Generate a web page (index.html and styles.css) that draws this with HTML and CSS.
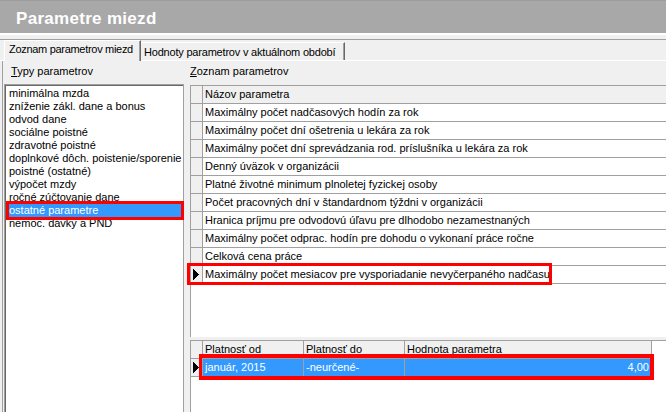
FILE: index.html
```html
<!DOCTYPE html>
<html lang="sk">
<head>
<meta charset="utf-8">
<title>Parametre miezd</title>
<link rel="stylesheet" href="styles.css">
</head>
<body>
<div class="titlebar"><span class="title">Parametre miezd</span></div>
<div class="hl"></div>
<div class="tabstrip">
  <div class="tabrow">
    <div class="tab active">Zoznam parametrov miezd</div>
    <div class="tab">Hodnoty parametrov v aktuálnom období</div>
  </div>
</div>
<div class="sheet">
  <div class="frame">
    <div class="col-left">
      <div class="label lbl-left"><u>T</u>ypy parametrov</div>
      <div class="listbox">
        <div class="item">minimálna mzda</div>
        <div class="item">zníženie zákl. dane a bonus</div>
        <div class="item">odvod dane</div>
        <div class="item">sociálne poistné</div>
        <div class="item">zdravotné poistné</div>
        <div class="item">doplnkové dôch. poistenie/sporenie</div>
        <div class="item">poistné (ostatné)</div>
        <div class="item">výpočet mzdy</div>
        <div class="item">ročné zúčtovanie dane</div>
        <div class="item sel">ostatné parametre</div>
        <div class="item">nemoc. dávky a PND</div>
      </div>
    </div>
    <div class="col-right">
      <div class="label"><u>Z</u>oznam parametrov</div>
      <div class="grid upper">
        <div class="row head"><div class="ind"></div><div class="cell wide">Názov parametra</div></div>
        <div class="row"><div class="ind"></div><div class="cell wide">Maximálny počet nadčasových hodín za rok</div></div>
        <div class="row"><div class="ind"></div><div class="cell wide">Maximálny počet dní ošetrenia u lekára za rok</div></div>
        <div class="row"><div class="ind"></div><div class="cell wide">Maximálny počet dní sprevádzania rod. príslušníka u lekára za rok</div></div>
        <div class="row"><div class="ind"></div><div class="cell wide">Denný úväzok v organizácii</div></div>
        <div class="row"><div class="ind"></div><div class="cell wide">Platné životné minimum plnoletej fyzickej osoby</div></div>
        <div class="row"><div class="ind"></div><div class="cell wide">Počet pracovných dní v štandardnom týždni v organizácii</div></div>
        <div class="row"><div class="ind"></div><div class="cell wide">Hranica príjmu pre odvodovú úľavu pre dlhodobo nezamestnaných</div></div>
        <div class="row"><div class="ind"></div><div class="cell wide">Maximálny počet odprac. hodín pre dohodu o vykonaní práce ročne</div></div>
        <div class="row"><div class="ind"></div><div class="cell wide">Celková cena práce</div></div>
        <div class="row"><div class="ind"><svg class="arrow" width="6" height="11" viewBox="0 0 6 11"><rect x="0" y="0" width="1" height="11"/><rect x="1" y="1" width="1" height="9"/><rect x="2" y="2" width="1" height="7"/><rect x="3" y="3" width="1" height="5"/><rect x="4" y="4" width="1" height="3"/><rect x="5" y="5" width="1" height="1"/></svg></div><div class="cell wide">Maximálny počet mesiacov pre vysporiadanie nevyčerpaného nadčasu</div></div>
      </div>
      <div class="splitter"></div>
      <div class="grid lower">
        <div class="row head fit"><div class="ind"></div><div class="cell c1">Platnosť od</div><div class="cell c2">Platnosť do</div><div class="cell c3">Hodnota parametra</div></div>
        <div class="row fit selrow"><div class="ind"><svg class="arrow" width="6" height="11" viewBox="0 0 6 11"><rect x="0" y="0" width="1" height="11"/><rect x="1" y="1" width="1" height="9"/><rect x="2" y="2" width="1" height="7"/><rect x="3" y="3" width="1" height="5"/><rect x="4" y="4" width="1" height="3"/><rect x="5" y="5" width="1" height="1"/></svg></div><div class="cell c1">január, 2015</div><div class="cell c2">-neurčené-</div><div class="cell c3 num">4,00</div></div>
      </div>
    </div>
  </div>
</div>
<div class="mark mark-list"></div>
<div class="mark mark-row"></div>
<div class="mark mark-val"></div>
</body>
</html>
```
FILE: styles.css
```css
html, body {
  margin: 0;
  padding: 0;
}
body {
  width: 666px;
  height: 412px;
  overflow: hidden;
  position: relative;
  background: #f0f0f0;
  font-family: "Liberation Sans", Arial, sans-serif;
  font-size: 11px;
  color: #000;
}
.titlebar {
  height: 29px;
  padding: 3px 0 0 16px;
  border-top: 1px solid #9c9c9c;
  background: #a8a8a8;
}
.title {
  display: block;
  line-height: 29px;
  font-size: 17px;
  font-weight: bold;
  letter-spacing: 0.3px;
  color: #fff;
}
.hl {
  height: 2px;
  background: #fff;
}
.tabstrip {
  padding-top: 4px;
}
.tabrow {
  display: flex;
  align-items: flex-start;
  height: 20px;
  padding-left: 4px;
  border-top: 1px solid #a0a0a0;
}
.tab {
  box-sizing: border-box;
  white-space: nowrap;
  overflow: hidden;
  background: #f0f0f0;
  border-top: 1px solid #fff;
  border-left: 1px solid #fff;
  border-right: 1px solid #696969;
  box-shadow: inset -1px 0 0 #a0a0a0;
  line-height: 17px;
  letter-spacing: -0.2px;
}
.tab.active {
  width: 137px;
  height: 21px;
  padding-left: 4px;
  z-index: 1;
  letter-spacing: -0.3px;
}
.tab:not(.active) {
  width: 204px;
  height: 18px;
  margin-top: 2px;
  padding: 1px 0 0 3px;
  border-left: none;
}
.sheet {
  border-top: 1px solid #fff;
  padding-left: 2px;
}
.frame {
  display: flex;
  gap: 6px;
  border-left: 1px solid #a0a0a0;
  padding: 4px 0 0 1px;
  height: 347px;
}
.col-left {
  width: 180px;
  flex: none;
}
.col-right {
  flex: 1;
  min-width: 0;
}
.label {
  height: 13px;
  line-height: 13px;
  white-space: nowrap;
}
.lbl-left {
  padding-left: 7px;
}
.listbox {
  margin-top: 6px;
  height: 326px;
  padding-top: 2px;
  background: #fff;
  border-top: 1px solid #a0a0a0;
  border-left: 1px solid #a0a0a0;
  border-right: 1px solid #a0a0a0;
  box-shadow: inset 1px 1px 0 #696969;
  padding-left: 1px;
}
.item {
  height: 13px;
  line-height: 13px;
  padding-left: 3px;
  white-space: nowrap;
  overflow: hidden;
}
.item.sel {
  background: #3399ff;
  color: #fff;
}
.grid {
  background: #fff;
  border-top: 1px solid #a0a0a0;
  border-left: 1px solid #a0a0a0;
  overflow: hidden;
}
.upper {
  margin-top: 7px;
  height: 251px;
}
.splitter {
  height: 3px;
}
.lower {
  height: 71px;
}
.row {
  display: flex;
  height: 17px;
  border-bottom: 1px solid #a0a0a0;
}
.row.fit {
  width: max-content;
}
.ind {
  flex: none;
  width: 11px;
  border-right: 1px solid #a0a0a0;
  background: #f0f0f0;
  display: flex;
  align-items: center;
}
.arrow {
  display: block;
  margin-left: 2px;
  fill: #000;
}
.cell {
  line-height: 17px;
  padding-left: 2px;
  white-space: nowrap;
  overflow: hidden;
}
.cell.wide {
  flex: 1;
}
.head .cell {
  background: #f0f0f0;
}
.c1, .c2 {
  box-sizing: border-box;
  width: 101px;
  border-right: 1px solid #a0a0a0;
}
.c3 {
  box-sizing: border-box;
  width: 247px;
  border-right: 1px solid #a0a0a0;
}
.num {
  text-align: right;
  padding-right: 2px;
}
.selrow .cell {
  background: #3399ff;
  color: #fff;
}
.mark {
  position: absolute;
  box-sizing: border-box;
  border: 3px solid #ff0000;
}
.mark-list {
  left: 6px;
  top: 201px;
  width: 178px;
  height: 19px;
}
.mark-row {
  left: 187px;
  top: 263px;
  width: 365px;
  height: 22px;
}
.mark-val {
  left: 199px;
  top: 354px;
  width: 455px;
  height: 26px;
  border-width: 4px 4px 4px 3px;
}
```
